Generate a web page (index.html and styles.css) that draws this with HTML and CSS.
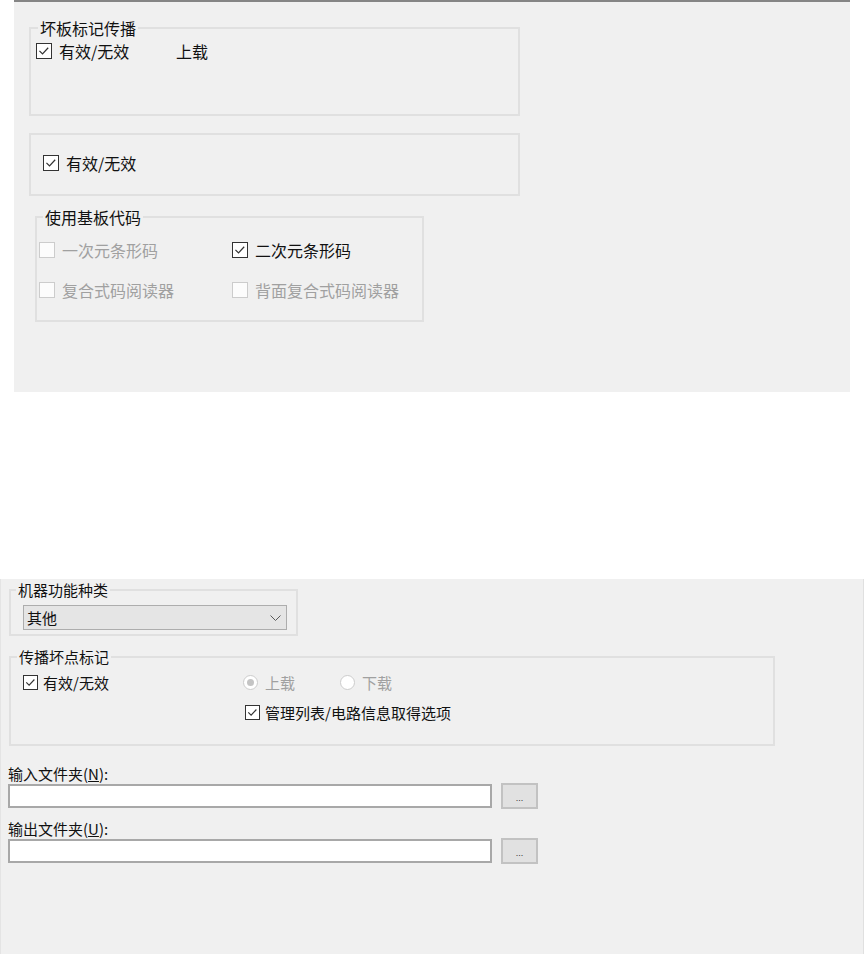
FILE: index.html
```html
<!DOCTYPE html>
<html lang="zh-CN">
<head>
<meta charset="utf-8">
<title>设置</title>
<link rel="stylesheet" href="styles.css">
</head>
<body>
<section class="panel panel-top">
  <fieldset class="group g1">
    <legend>坏板标记传播</legend>
    <div class="gbody g1-body">
      <label class="chk w140"><span class="box checked"><svg viewBox="0 0 16 16"><polyline points="2.8,7.8 6.3,11.3 12.8,4.3"/></svg></span>有效/无效</label>
      <span class="plain">上载</span>
    </div>
  </fieldset>
  <fieldset class="group g2">
    <div class="gbody g2-body">
      <label class="chk"><span class="box checked"><svg viewBox="0 0 16 16"><polyline points="2.8,7.8 6.3,11.3 12.8,4.3"/></svg></span>有效/无效</label>
    </div>
  </fieldset>
  <fieldset class="group g3">
    <legend>使用基板代码</legend>
    <div class="gbody g3-body">
      <label class="chk disabled"><span class="box"></span>一次元条形码</label>
      <label class="chk"><span class="box checked"><svg viewBox="0 0 16 16"><polyline points="2.8,7.8 6.3,11.3 12.8,4.3"/></svg></span>二次元条形码</label>
      <label class="chk disabled"><span class="box"></span>复合式码阅读器</label>
      <label class="chk disabled"><span class="box"></span>背面复合式码阅读器</label>
    </div>
  </fieldset>
</section>

<section class="panel panel-bottom">
  <fieldset class="group ga">
    <legend>机器功能种类</legend>
    <div class="gbody ga-body">
      <div class="combo"><span>其他</span><svg class="chev" viewBox="0 0 11 6"><polyline points="0.5,0.5 5.5,5.5 10.5,0.5"/></svg></div>
    </div>
  </fieldset>
  <fieldset class="group gb">
    <legend>传播坏点标记</legend>
    <div class="gbody gb-body">
      <label class="chk sm left-col"><span class="box checked"><svg viewBox="0 0 16 16"><polyline points="2.8,7.8 6.3,11.3 12.8,4.3"/></svg></span>有效/无效</label>
      <div class="right-col">
        <div class="radios">
          <label class="radio disabled"><span class="dot on"></span>上载</label>
          <label class="radio disabled"><span class="dot"></span>下载</label>
        </div>
        <label class="chk sm opt"><span class="box checked"><svg viewBox="0 0 16 16"><polyline points="2.8,7.8 6.3,11.3 12.8,4.3"/></svg></span>管理列表/电路信息取得选项</label>
      </div>
    </div>
  </fieldset>
  <div class="files">
    <div class="flabel">输入文件夹(<u>N</u>):</div>
    <div class="frow"><div class="finput"></div><div class="fbtn">...</div></div>
    <div class="flabel second">输出文件夹(<u>U</u>):</div>
    <div class="frow"><div class="finput"></div><div class="fbtn">...</div></div>
  </div>
</section>
</body>
</html>
```

FILE: styles.css
```css
body {
  margin: 0;
  background: #ffffff;
  font-family: "Noto Sans CJK SC", "Microsoft YaHei", sans-serif;
  color: #111111;
}

.panel {
  background: #f0f0f0;
  box-sizing: border-box;
  overflow: hidden;
}

.panel-top {
  margin-left: 14px;
  width: 836px;
  height: 392px;
  border-top: 2px solid #858585;
  padding-top: 16px;
  font-size: 16px;
}

.panel-bottom {
  margin-top: 187px;
  width: 864px;
  height: 375px;
  border-left: 1px solid #e4e4e4;
  border-right: 1px solid #e0e0e0;
  padding-top: 2px;
  font-size: 15px;
}

.group {
  margin: 0;
  padding: 0;
  border: 2px solid #e0e0e0;
  min-inline-size: 0;
  box-sizing: border-box;
}

.group legend {
  padding: 0 2px;
  line-height: 20px;
}

.gbody {
  box-sizing: border-box;
}

/* top panel groups */
.g1 {
  margin-left: 15px;
  width: 491px;
  height: 98px;
}
.g1 legend { margin-left: 7px; }
.g1-body {
  display: flex;
  align-items: center;
  padding: 3px 0 0 5px;
}

.g2 {
  margin: 17px 0 0 15px;
  width: 491px;
  height: 63px;
}
.g2-body {
  padding: 17.5px 0 0 12px;
}

.g3 {
  margin: 11px 0 0 21px;
  width: 389px;
  height: 115px;
}
.g3 legend { margin-left: 6px; }
.g3-body {
  display: grid;
  grid-template-columns: 193px auto;
  grid-auto-rows: 20px;
  row-gap: 20px;
  padding: 13px 0 0 2px;
}

/* checkbox */
.chk {
  display: flex;
  align-items: center;
  gap: 7px;
  height: 20px;
  line-height: 20px;
  white-space: nowrap;
}
.w140 { width: 140px; }
.plain { line-height: 20px; }

.box {
  width: 16px;
  height: 16px;
  box-sizing: border-box;
  border: 1px solid #333333;
  background: #ffffff;
  flex: none;
  display: flex;
}
.box svg {
  width: 100%;
  height: 100%;
  fill: none;
  stroke: #333333;
  stroke-width: 1.4;
}
.chk.disabled { color: #a0a0a0; }
.chk.disabled .box { border-color: #cccccc; background: #fcfcfc; }

.chk.sm { gap: 5px; height: 18px; line-height: 18px; }
.chk.sm .box { width: 15px; height: 15px; }

/* bottom panel groups */
.ga, .gb { margin-left: 8px; }
.ga legend, .gb legend { line-height: 18px; }

.ga {
  width: 289px;
  height: 55px;
}
.ga legend { margin-left: 5px; }
.ga-body { padding: 6px 0 0 12px; }

.combo {
  width: 264px;
  height: 25px;
  box-sizing: border-box;
  border: 1px solid #adadad;
  background: #e5e5e5;
  display: flex;
  align-items: center;
  justify-content: space-between;
  padding: 0 5px 0 3px;
  line-height: 18px;
}
.chev {
  width: 11px;
  height: 6px;
  fill: none;
  stroke: #5a5a5a;
  stroke-width: 1;
}

.gb {
  margin-top: 12px;
  width: 766px;
  height: 98px;
}
.gb legend { margin-left: 6px; }
.gb-body {
  display: flex;
  padding: 7.5px 0 0 12px;
}
.left-col { width: 220px; }
.right-col {
  display: flex;
  flex-direction: column;
  gap: 12px;
}
.radios { display: flex; }
.radio {
  width: 97px;
  display: flex;
  align-items: center;
  gap: 7px;
  height: 18px;
  line-height: 18px;
}
.radio.disabled { color: #a0a0a0; }
.dot {
  width: 15px;
  height: 15px;
  box-sizing: border-box;
  border: 1px solid #cccccc;
  border-radius: 50%;
  background: #ffffff;
  display: flex;
  align-items: center;
  justify-content: center;
  flex: none;
}
.dot.on::after {
  content: "";
  width: 7px;
  height: 7px;
  border-radius: 50%;
  background: #c4c4c4;
}
.opt { margin-left: 2px; }

/* folder fields */
.files {
  margin: 19px 0 0 7px;
}
.flabel {
  line-height: 18px;
  height: 18px;
}
.flabel.second { margin-top: 11px; }
.frow {
  display: flex;
  align-items: center;
  height: 26px;
}
.finput {
  width: 484px;
  height: 24px;
  box-sizing: border-box;
  border: 2px solid #a8a8a8;
  background: #ffffff;
}
.fbtn {
  margin-left: 9px;
  width: 37px;
  height: 26px;
  box-sizing: border-box;
  border: 2px solid #c2c2c2;
  background: #e1e1e1;
  font-family: "Liberation Sans", sans-serif;
  font-size: 9px;
  color: #333333;
  display: flex;
  justify-content: center;
  align-items: center;
  padding-top: 3px;
}
```
